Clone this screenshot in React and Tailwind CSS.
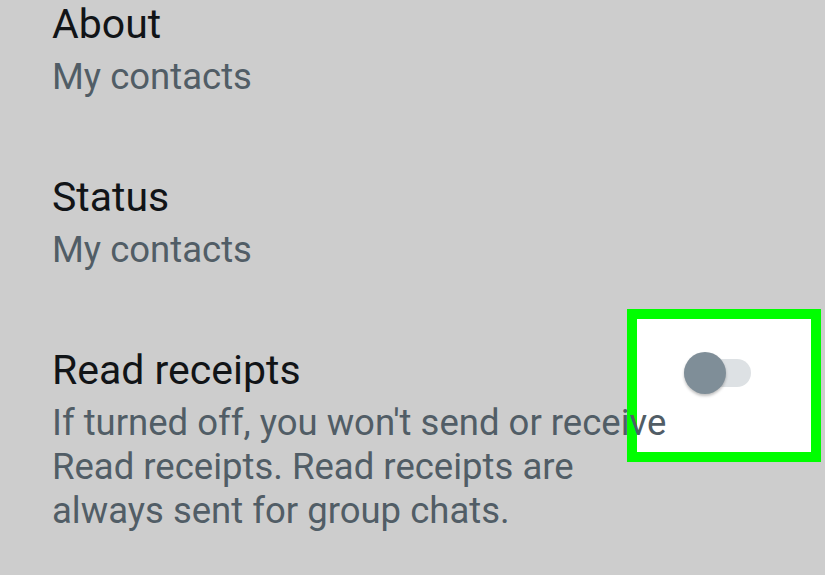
import React from "react";

function Setting({ title, children }) {
  return (
    <div className="relative z-10">
      <div className="text-[41px] leading-[48px] text-[#111417]">{title}</div>
      <div className="mt-[7px] text-[36.5px] leading-[44px] text-[#515d66]">{children}</div>
    </div>
  );
}

export default function App() {
  return (
    <div
      className="relative h-[575px] w-[825px] overflow-hidden bg-[#cdcdcd]"
      style={{ fontFamily: "Roboto, 'Noto Sans', sans-serif" }}
    >
      <div className="flex flex-col gap-[74px] px-[52px]">
        <Setting title="About">My contacts</Setting>
        <Setting title="Status">My contacts</Setting>
        <Setting title="Read receipts">
          If turned off, you won't send or receive
          <br />
          Read receipts. Read receipts are
          <br />
          always sent for group chats.
        </Setting>
      </div>

      {/* highlight box around the switch */}
      <div className="absolute left-[627px] top-[309px] z-0 flex h-[153px] w-[194px] items-start border-[10px] border-[#00fe00] bg-white pl-[47px] pt-[33px]">
        <div className="relative flex h-[42px] w-[67px] items-center">
          <div className="h-[28px] w-[67px] rounded-full bg-[#dde1e4]" />
          <div className="absolute left-0 top-0 h-[42px] w-[42px] rounded-full bg-[#7f8e98] shadow-[0_2px_3px_rgba(0,0,0,0.25)]" />
        </div>
      </div>
    </div>
  );
}
